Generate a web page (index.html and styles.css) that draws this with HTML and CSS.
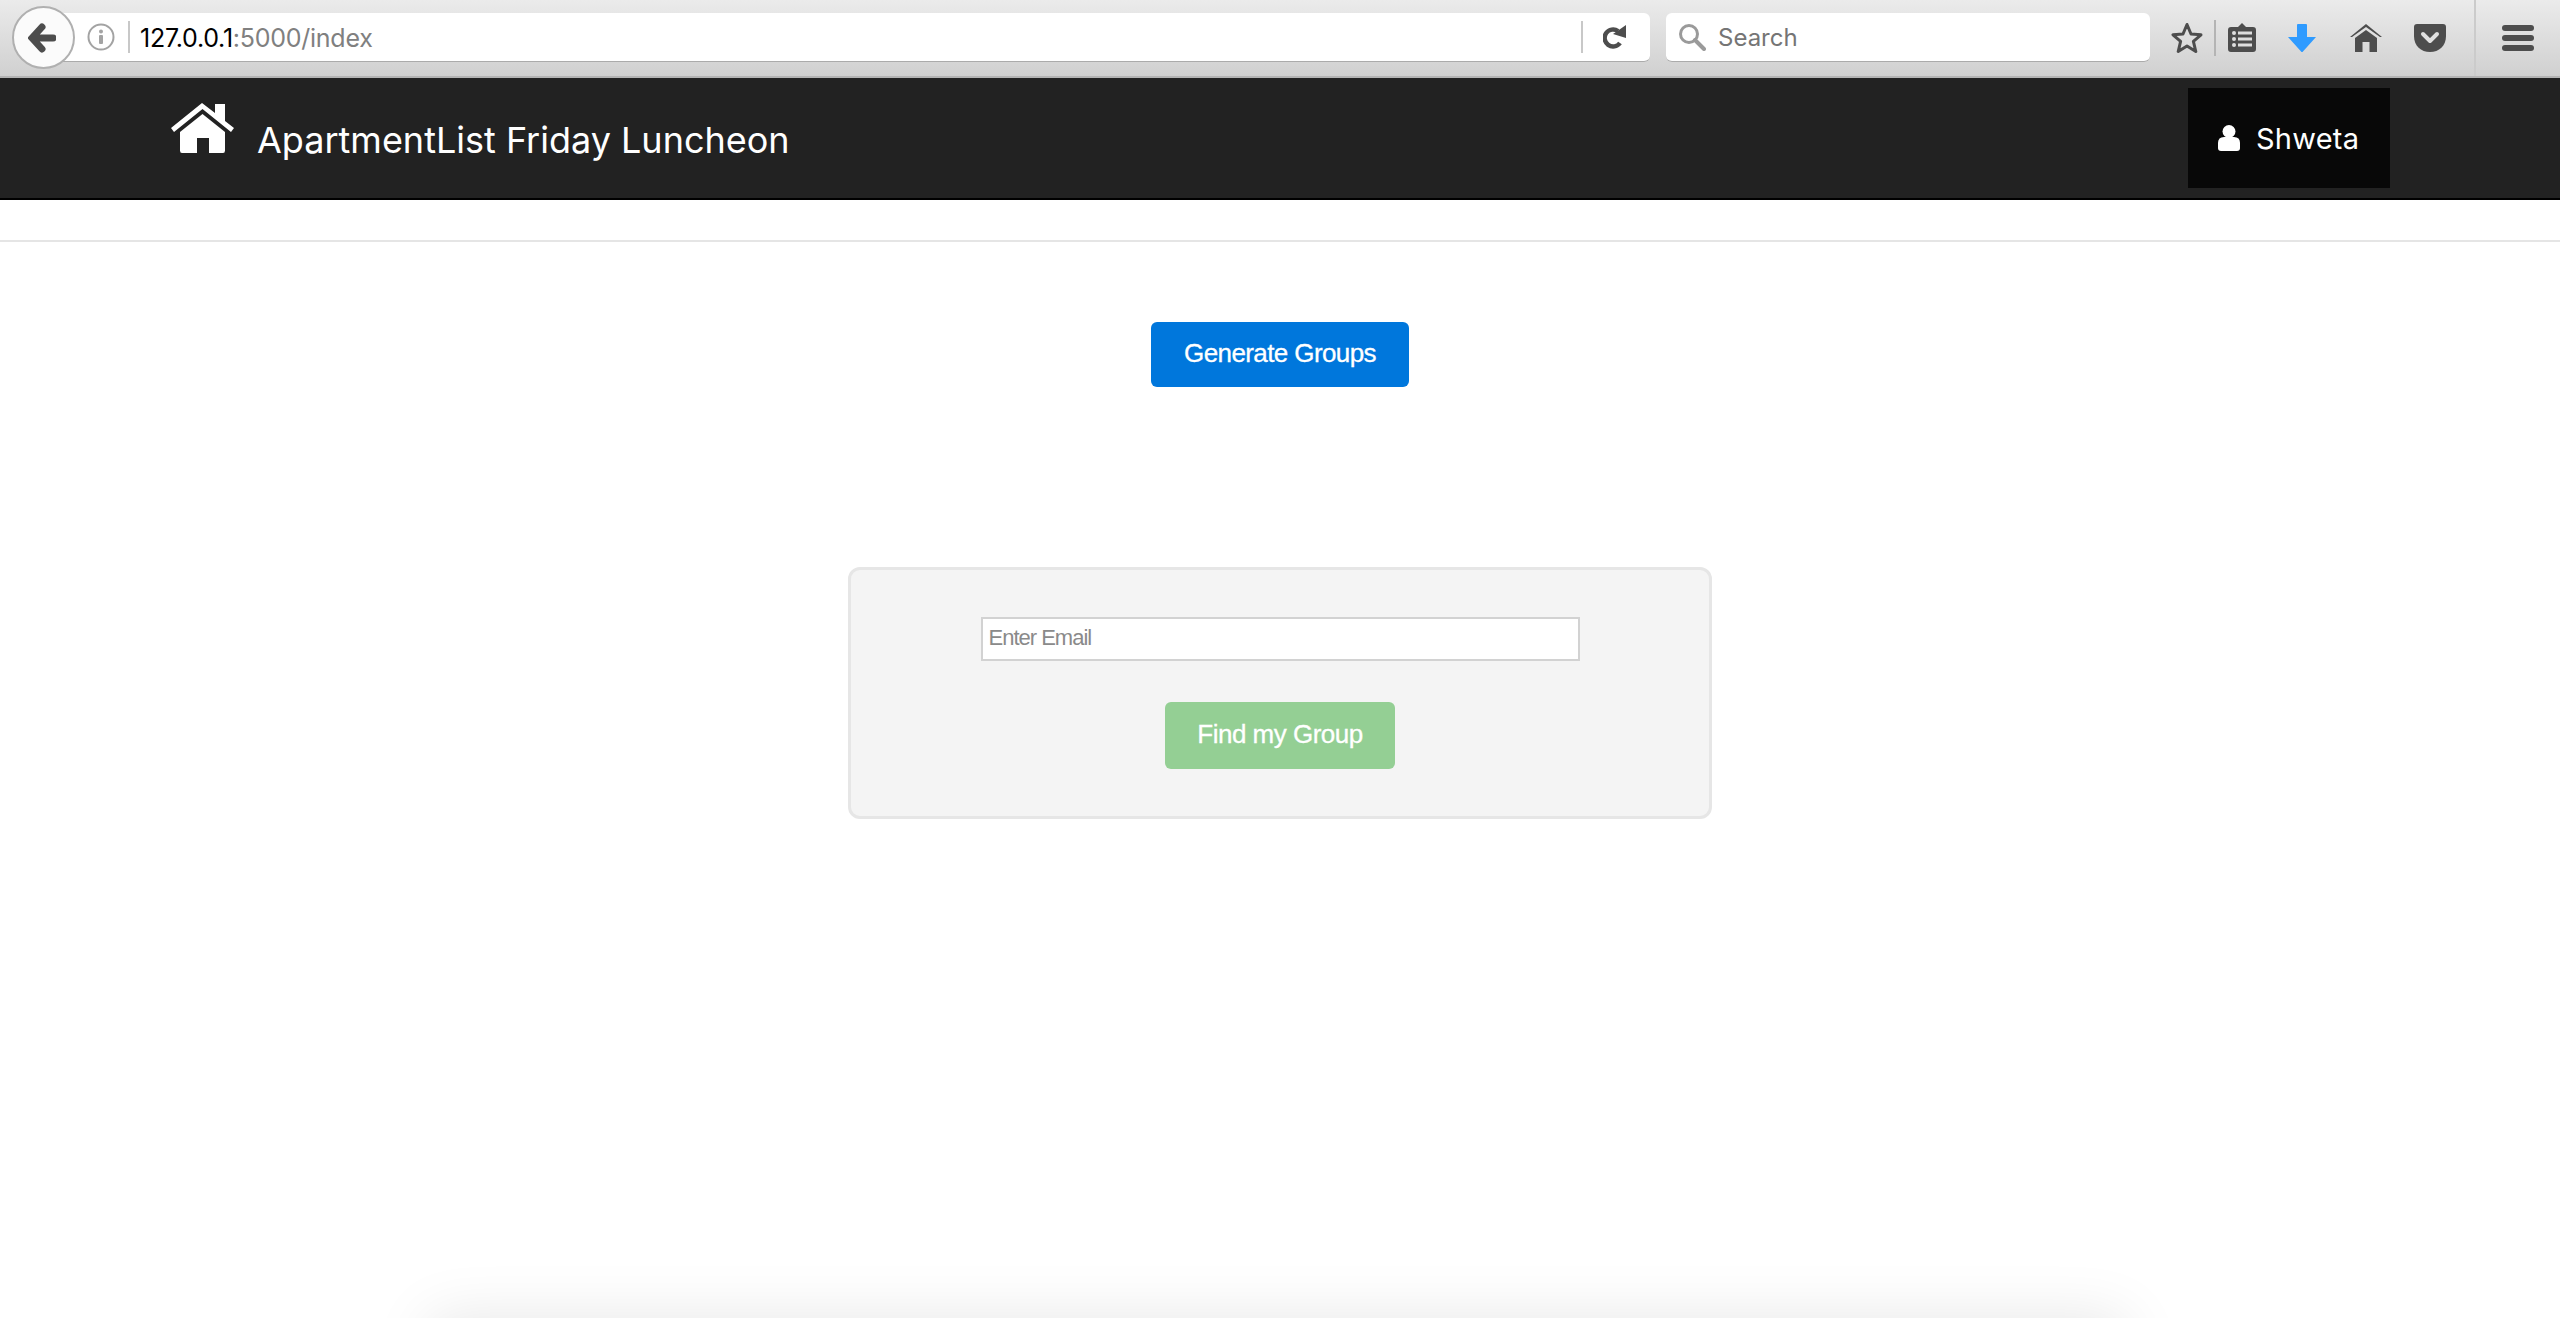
FILE: index.html
```html
<!DOCTYPE html>
<html lang="en">
<head>
    <meta charset="UTF-8">
    <meta name="viewport" content="width=device-width, initial-scale=1.0">
    <title>ApartmentList Friday Luncheon</title>
    <link rel="stylesheet" href="styles.css">
</head>
<body>
    <div class="toolbar">
        <div class="back-btn">
            <svg class="icon-back" viewBox="0 0 28 30"><path d="M14 4 L4 15 L14 26 M6 15 L25 15" fill="none" stroke="#4d4d4d" stroke-width="7" stroke-linecap="round" stroke-linejoin="miter"/></svg>
        </div>
        <div class="url-bar">
            <svg class="icon-info" viewBox="0 0 28 28"><circle cx="14" cy="14" r="12.500" fill="none" stroke="#a3a3a3" stroke-width="2"/><rect x="12" y="12" width="4" height="9" rx="1" fill="#a3a3a3"/><circle cx="14" cy="8.500" r="2" fill="#a3a3a3"/></svg>
            <span class="url-sep"></span>
            <span class="url-text"><span class="url-host">127.0.0.1</span>:5000/index</span>
            <span class="url-sep url-sep-right"></span>
            <svg class="icon-reload" viewBox="0 0 23 24"><path d="M15 6 A8.500 8.500 0 1 0 17 18" fill="none" stroke="#4d4d4d" stroke-width="4.500"/><path d="M23 0 L23 13 L10 9 Z" fill="#4d4d4d"/></svg>
        </div>
        <div class="search-bar">
            <svg class="icon-search" viewBox="0 0 28 28"><circle cx="11" cy="11" r="8.500" fill="none" stroke="#9a9a9a" stroke-width="3"/><path d="M17 17 L26 26" stroke="#9a9a9a" stroke-width="4" stroke-linecap="round"/></svg>
            <span class="search-text">Search</span>
        </div>
        <div class="tools">
            <svg class="tool-star" viewBox="0 0 32 32"><path d="M16 2.500 L20 12 L30 12.800 L22.400 19.400 L24.800 29.500 L16 24 L7.200 29.500 L9.600 19.400 L2 12.800 L12 12 Z" fill="none" stroke="#4d4d4d" stroke-width="3" stroke-linejoin="round"/></svg>
            <span class="tool-sep"></span>
            <svg class="tool-list" viewBox="0 0 28 30"><path d="M3 4 L10 4 L14 0 L18 4 L25 4 Q28 4 28 7 L28 26 Q28 29 25 29 L3 29 Q0 29 0 26 L0 7 Q0 4 3 4 Z" fill="#4d4d4d"/><g fill="#dedede"><circle cx="6" cy="10" r="2"/><circle cx="6" cy="16" r="2"/><circle cx="6" cy="22" r="2"/><rect x="10" y="8.500" width="14" height="3"/><rect x="10" y="14.500" width="14" height="3"/><rect x="10" y="20.500" width="14" height="3"/></g></svg>
            <svg class="tool-down" viewBox="0 0 28 28"><path d="M9 1 Q9 0 10 0 L18 0 Q19 0 19 1 L19 13 L28 13 L14.500 28 L13.500 28 L0 13 L9 13 Z" fill="#2f9bff"/></svg>
            <svg class="tool-home" viewBox="0 0 32 28"><path d="M0 13 L16 0 L32 13 L30 13 L16 3 L2 13 Z" fill="#4d4d4d"/><path d="M5 14 L16 6 L27 14 L27 28 L19.500 28 L19.500 18 L12.500 18 L12.500 28 L5 28 Z" fill="#4d4d4d"/></svg>
            <svg class="tool-pocket" viewBox="0 0 32 28"><path d="M3 0 L29 0 Q32 0 32 3 L32 12 C32 22 25 28 16 28 C7 28 0 22 0 12 L0 3 Q0 0 3 0 Z" fill="#4d4d4d"/><path d="M9 10 L16 17 L23 10" fill="none" stroke="#e0e0e0" stroke-width="4" stroke-linecap="round" stroke-linejoin="round"/></svg>
            <span class="tool-divider"></span>
            <div class="menu-btn"><span></span><span></span><span></span></div>
        </div>
    </div>

    <nav class="navbar">
        <a class="brand">
            <svg class="brand-icon" viewBox="0 0 63 50"><path d="M0 25 L31 0 L44 10 L44 1 L54 1 L54 18 L63 25 L60 29 L31.500 6 L3 29 Z" fill="#fff"/><path d="M9 29 L31.500 11 L54 29 L54 47.500 Q54 50 52 50 L38 50 L38 35 L26 35 L26 50 L11 50 Q9 50 9 47.500 Z" fill="#fff"/></svg>
            <span class="brand-name">ApartmentList Friday Luncheon</span>
        </a>
        <a class="user-link">
            <svg class="user-icon" viewBox="0 0 22 26"><circle cx="11" cy="6.500" r="6.500" fill="#fff"/><path d="M0 18 Q0 12 6 12 L16 12 Q22 12 22 18 L22 23 Q22 26 19 26 L3 26 Q0 26 0 23 Z" fill="#fff"/></svg>
            Shweta
        </a>
    </nav>

    <hr class="divider">

    <div class="content">
        <button class="btn btn-blue">Generate Groups</button>
        <div class="well">
            <input class="email" type="text" placeholder="Enter Email">
            <button class="btn btn-green">Find my Group</button>
        </div>
    </div>

    <div class="bottom-fade">
        <div class="bottom-shadow"></div>
    </div>
</body>
</html>
```

FILE: styles.css
```css
html, body {
    height: 100%;
}
body {
    margin: 0;
    background: #fff;
    font-family: "Liberation Sans", Arial, sans-serif;
    display: flex;
    flex-direction: column;
    overflow: hidden;
}

/* browser chrome */
.toolbar {
    box-sizing: border-box;
    height: 78px;
    flex-shrink: 0;
    padding: 0 26px 0 12px;
    display: flex;
    align-items: center;
    background: linear-gradient(#ebebeb, #d0d0d0);
    border-bottom: 2px solid #b4b4b4;
}
.back-btn {
    box-sizing: border-box;
    position: relative;
    z-index: 1;
    width: 63px;
    height: 63px;
    flex-shrink: 0;
    margin-right: -16px;
    margin-bottom: 1px;
    display: flex;
    align-items: center;
    justify-content: center;
    background: #fbfbfb;
    border: 2px solid #b0b0b0;
    border-radius: 50%;
}
.icon-back {
    width: 28px;
    height: 30px;
    margin-right: 3px;
}
.url-bar {
    box-sizing: border-box;
    width: 1591px;
    height: 49px;
    margin-bottom: 2px;
    padding-left: 28px;
    flex-shrink: 0;
    display: flex;
    align-items: center;
    background: #fff;
    border-bottom: 1px solid #ababab;
    border-radius: 0 6px 6px 0;
}
.icon-info {
    width: 28px;
    height: 28px;
}
.url-sep {
    width: 2px;
    height: 32px;
    margin: 0 10px 0 13px;
    background: #c8c8c8;
}
.url-text {
    flex: 1;
    padding-top: 2px;
    font-family: Inter, sans-serif;
    font-size: 25px;
    letter-spacing: -0.25px;
    color: #808080;
}
.url-host {
    color: #000;
}
.url-sep-right {
    margin: 0 20px 0 0;
}
.icon-reload {
    width: 23px;
    height: 24px;
    margin-right: 24px;
}
.search-bar {
    box-sizing: border-box;
    width: 484px;
    height: 49px;
    margin: 0 0 2px 16px;
    padding-left: 12px;
    flex-shrink: 0;
    display: flex;
    align-items: center;
    background: #fff;
    border-bottom: 1px solid #ababab;
    border-radius: 6px;
}
.icon-search {
    width: 28px;
    height: 28px;
}
.search-text {
    margin-left: 12px;
    padding-top: 2px;
    font-family: Inter, sans-serif;
    font-size: 24px;
    color: #757575;
}
.tools {
    flex: 1;
    height: 76px;
    display: flex;
    align-items: center;
}
.tools svg {
    flex-shrink: 0;
}
.tool-star {
    width: 32px;
    height: 32px;
    margin-left: 21px;
}
.tool-sep {
    width: 2px;
    height: 36px;
    margin: 0 12px 0 11px;
    background: #b4b4b4;
}
.tool-list {
    width: 28px;
    height: 30px;
}
.tool-down {
    width: 28px;
    height: 28px;
    margin-left: 32px;
}
.tool-home {
    width: 32px;
    height: 28px;
    margin-left: 34px;
}
.tool-pocket {
    width: 32px;
    height: 28px;
    margin-left: 32px;
}
.tool-divider {
    width: 2px;
    height: 76px;
    margin: 0 26px 0 28px;
    background: #cbcbcb;
}
.menu-btn {
    width: 32px;
    display: flex;
    flex-direction: column;
    gap: 4px;
}
.menu-btn span {
    height: 6px;
    border-radius: 3px;
    background: #4d4d4d;
}

/* navbar */
.navbar {
    box-sizing: border-box;
    height: 122px;
    flex-shrink: 0;
    padding: 0 170px 0 171px;
    display: flex;
    align-items: center;
    justify-content: space-between;
    background: #222;
    border-bottom: 2px solid #000;
}
.brand {
    display: flex;
    align-items: flex-start;
    color: #fff;
}
.brand-icon {
    width: 63px;
    height: 50px;
    margin-top: -11px;
}
.brand-name {
    margin: 4px 0 0 23px;
    font-family: Inter, sans-serif;
    font-size: 36px;
    line-height: 44px;
}
.user-link {
    box-sizing: border-box;
    width: 202px;
    height: 100px;
    padding-left: 30px;
    display: flex;
    align-items: center;
    gap: 16px;
    background: #080808;
    color: #fff;
    font-family: Inter, sans-serif;
    font-size: 29px;
    letter-spacing: 0.25px;
}
.user-icon {
    width: 22px;
    height: 26px;
}

.divider {
    width: 100%;
    height: 2px;
    margin: 40px 0 0;
    flex-shrink: 0;
    border: 0;
    background: #e5e5e5;
}

/* page */
.content {
    padding-top: 80px;
    display: flex;
    flex-direction: column;
    align-items: center;
}
.btn {
    box-sizing: border-box;
    padding: 0 0 3px;
    border: 0;
    border-radius: 6px;
    color: #fff;
    font-family: "Liberation Sans", Arial, sans-serif;
    font-size: 26px;
    -webkit-text-stroke: 0.3px #fff;
}
.btn-blue {
    width: 258px;
    height: 65px;
    background: #0077dc;
    letter-spacing: -0.6px;
}
.well {
    box-sizing: border-box;
    width: 864px;
    height: 252px;
    margin-top: 180px;
    padding-top: 47px;
    display: flex;
    flex-direction: column;
    align-items: center;
    background: #f4f4f4;
    border: 3px solid #e6e6e6;
    border-radius: 12px;
}
.email {
    box-sizing: border-box;
    width: 599px;
    height: 44px;
    padding: 0 6px 2px;
    background: #fff;
    border: 2px solid #d2d2d2;
    font-family: "Liberation Sans", Arial, sans-serif;
    font-size: 22px;
    letter-spacing: -1px;
}
.email::placeholder {
    color: #8a8a8a;
}
.btn-green {
    width: 230px;
    height: 67px;
    margin-top: 41px;
    background: #94cf94;
    letter-spacing: -0.5px;
}

/* faint shadow coming up from under the bottom edge */
.bottom-fade {
    height: 70px;
    margin-top: auto;
    flex-shrink: 0;
    overflow: hidden;
}
.bottom-shadow {
    width: 1695px;
    height: 120px;
    margin: 70px 0 0 430px;
    box-shadow: 0 0 60px 0 rgba(0, 0, 0, 0.1);
}
```
